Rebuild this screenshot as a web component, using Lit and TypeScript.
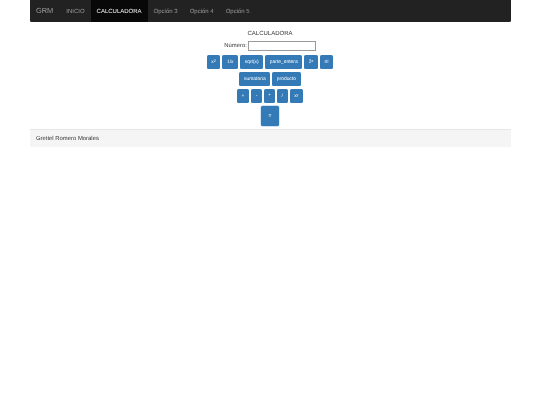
import { LitElement, html, css } from "lit";
import { customElement } from "lit/decorators.js";

@customElement("app-root")
export class AppRoot extends LitElement {
  static styles = css`
    :host { display: block; font-family: "Liberation Sans", Arial, sans-serif; font-size: 6px; color: #333; background: #fff; min-height: 405px; text-rendering: geometricPrecision; }
    .container { width: 481px; margin: 0 auto; filter: blur(0.3px); }
    .navbar { height: 22px; background: #222; border-radius: 0 0 1.6px 1.6px; box-sizing: border-box; display: flex; align-items: stretch; padding-left: 6.5px; }
    .brand { font-size: 7.4px; color: #9d9d9d; display: flex; align-items: center; margin-right: 7px; padding-bottom: 1px; }
    .nav { display: flex; }
    .nav a { color: #9d9d9d; padding: 1px 6px 0; display: flex; align-items: center; font-size: 6px; }
    .nav a.active { color: #fff; background: #080808; }
    .main { display: flex; flex-direction: column; align-items: center; }
    .title { margin-top: 9px; height: 6px; line-height: 6px; font-size: 6px; }
    .field { margin-top: 4px; height: 10px; display: flex; align-items: center; gap: 1.5px; font-size: 5.9px; }
    .field .box { width: 67.5px; height: 10px; box-sizing: border-box; border: 0.6px solid #9a9a9a; background: #fff; }
    .row { display: flex; justify-content: center; gap: 2px; margin-top: 3.5px; }
    .row.first { margin-top: 4px; }
    .btn { height: 13.5px; padding: 1px 4.6px 0; box-sizing: border-box; background: #337ab7; border-radius: 1.6px; color: #fff; font-size: 4.93px; display: flex; align-items: center; justify-content: center; }
    .btn sup { font-size: 3.7px; line-height: 0; position: relative; top: -0.8px; }
    .btn.eq { width: 18.5px; height: 20px; box-shadow: 0 0 0 0.4px #9cc3e6; }
    .footer { margin-top: 3px; height: 18px; background: #f5f5f5; border-top: 0.4px solid #e7e7e7; box-sizing: border-box; display: flex; align-items: center; padding-left: 6.5px; font-size: 5.9px; }
  `;
  render() {
    const sup = (a: string, b: string) => html`${a}<sup>${b}</sup>`;
    return html`<div class="container">
      <nav class="navbar">
        <div class="brand">GRM</div>
        <div class="nav">
          <a>INICIO</a><a class="active">CALCULADORA</a><a>Opción 3</a><a>Opción 4</a><a>Opción 5</a>
        </div>
      </nav>
      <main class="main">
        <div class="title">CALCULADORA</div>
        <div class="field"><span>Número:</span><div class="box"></div></div>
        <div class="row first">
          <div class="btn">${sup("x", "2")}</div><div class="btn">1/x</div><div class="btn">sqrt(x)</div><div class="btn">parte_entera</div><div class="btn">${sup("2", "x")}</div><div class="btn">n!</div>
        </div>
        <div class="row"><div class="btn">sumatoria</div><div class="btn">producto</div></div>
        <div class="row"><div class="btn">+</div><div class="btn">-</div><div class="btn">*</div><div class="btn">/</div><div class="btn">${sup("x", "y")}</div></div>
        <div class="row"><div class="btn eq">=</div></div>
      </main>
      <footer class="footer">Grettel Romero Morales</footer>
    </div>`;
  }
}
